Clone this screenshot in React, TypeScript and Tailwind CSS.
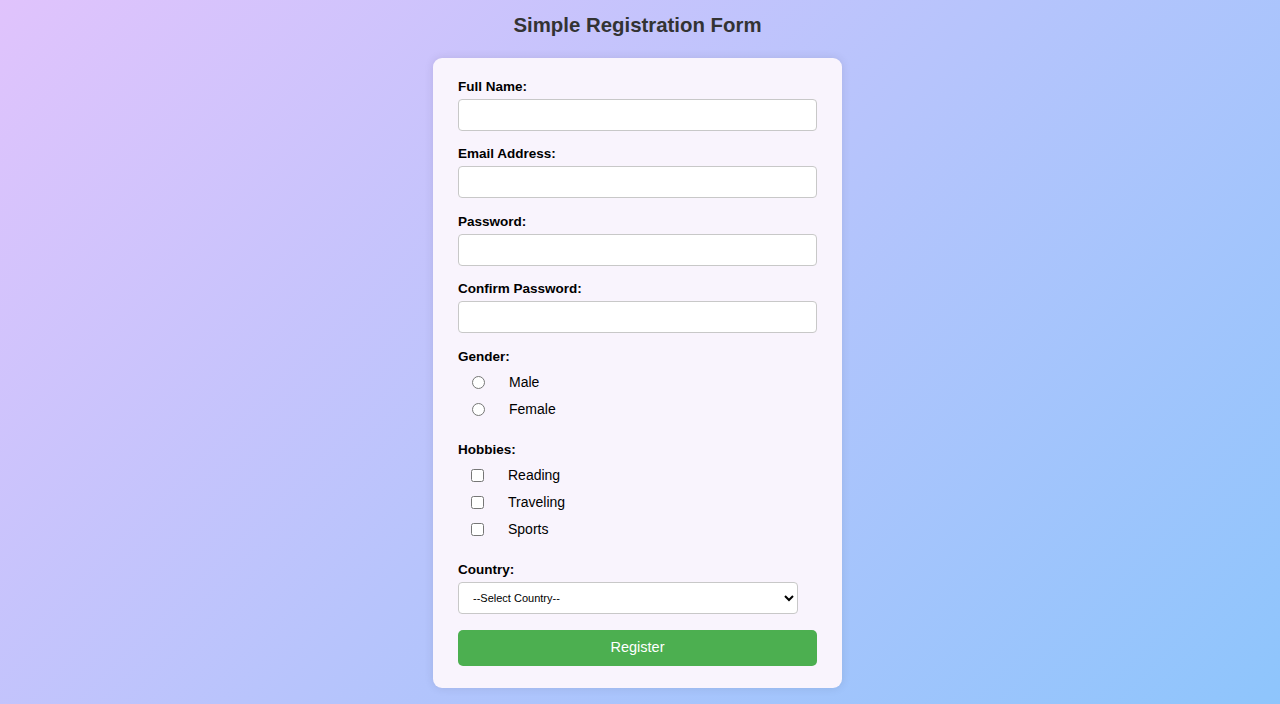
import React from 'react';

const font = { fontFamily: '"Liberation Sans", Arial, sans-serif' };

const labelCls = 'block text-[13.5px] leading-[18px] font-bold text-black mb-[3px]';

function Field({ label, type }: { label: string; type: string }) {
  return (
    <div className="mb-[14.4px]">
      <label className={labelCls}>{label}</label>
      <input
        type={type}
        className="block w-full h-[32px] rounded-[4px] border border-[#c8c8c8] bg-white px-2 text-[13px] outline-none"
      />
    </div>
  );
}

export default function App() {
  return (
    <div
      className="min-h-[704px] w-full bg-[linear-gradient(135deg,#e0c3fc_0%,#8ec5fc_100%)] flex flex-col items-center pt-[12px] pr-[5px]"
      style={font}
    >
      <h1 className="text-[20.4px] leading-[26px] font-bold text-[#333]">Simple Registration Form</h1>

      <form
        className="mt-[20px] w-[409px] rounded-[9px] bg-[#f9f4fd] px-[25px] pt-[20px] pb-[22px] shadow-[0_0_10px_rgba(0,0,0,0.1)]"
        onSubmit={(e) => e.preventDefault()}
      >
        <Field label="Full Name:" type="text" />
        <Field label="Email Address:" type="email" />
        <Field label="Password:" type="password" />
        <Field label="Confirm Password:" type="password" />

        {/* Gender */}
        <div className="mb-[18px]">
          <label className={labelCls}>Gender:</label>
          <div className="flex flex-col">
            {['Male', 'Female'].map((g) => (
              <label key={g} className="flex items-center h-[27px] pl-[14px] text-[14px] text-black">
                <input type="radio" name="gender" className="w-[13px] h-[13px] m-0" />
                <span className="ml-[24px]">{g}</span>
              </label>
            ))}
          </div>
        </div>

        {/* Hobbies */}
        <div className="mb-[18px]">
          <label className={labelCls}>Hobbies:</label>
          <div className="flex flex-col">
            {['Reading', 'Traveling', 'Sports'].map((h) => (
              <label key={h} className="flex items-center h-[27px] pl-[13px] text-[14px] text-black">
                <input type="checkbox" className="w-[13px] h-[13px] m-0" />
                <span className="ml-[24px]">{h}</span>
              </label>
            ))}
          </div>
        </div>

        {/* Country */}
        <div className="mb-[16px]">
          <label className={labelCls}>Country:</label>
          <select className="block w-[340px] h-[32px] rounded-[4px] border border-[#c8c8c8] bg-white px-[10px] text-[11px] text-black outline-none">
            <option>--Select Country--</option>
            <option>India</option>
            <option>USA</option>
            <option>UK</option>
          </select>
        </div>

        <button
          type="submit"
          className="block w-full h-[36px] rounded-[5px] bg-[#4caf50] text-white text-[14.5px]"
        >
          Register
        </button>
      </form>
    </div>
  );
}
